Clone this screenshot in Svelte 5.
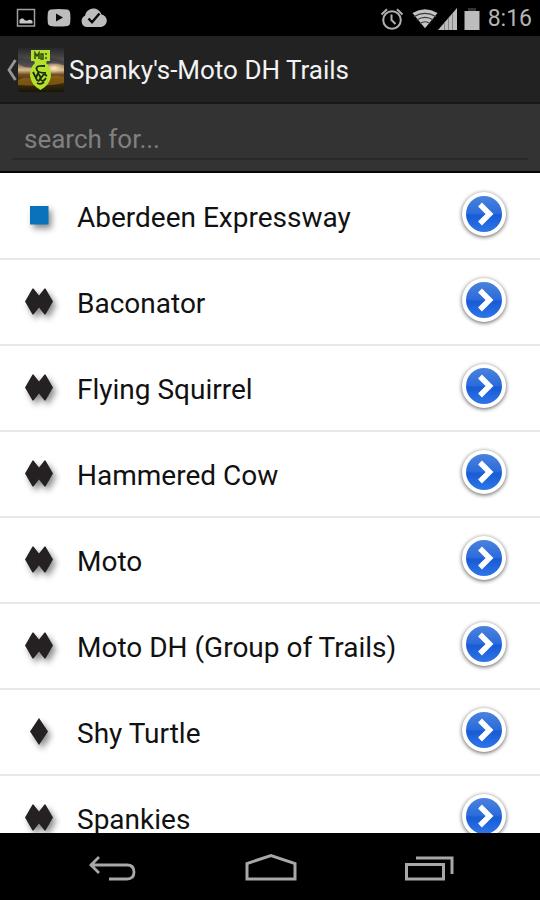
<script>
  const trails = [
    { name: 'Aberdeen Expressway', level: 'square' },
    { name: 'Baconator', level: 'double' },
    { name: 'Flying Squirrel', level: 'double' },
    { name: 'Hammered Cow', level: 'double' },
    { name: 'Moto', level: 'double' },
    { name: 'Moto DH (Group of Trails)', level: 'double' },
    { name: 'Shy Turtle', level: 'single' },
    { name: 'Spankies', level: 'double' }
  ];
  let query = $state('');
  let shown = $derived(trails.filter((t) => t.name.toLowerCase().includes(query.toLowerCase())));
</script>

<div class="screen">
  <div class="status">
    <div class="group left">
      <svg width="20" height="20" viewBox="0 0 20 20" aria-hidden="true">
        <rect x="1.5" y="1.5" width="17" height="16.500" fill="none" stroke="#a0a0a0" stroke-width="1.500" />
        <path d="M3.500 15.500v-3.500q3-3.500 5 0 2 1.500 4 0 2-1 4 1v2.500z" fill="#c8c8c8" />
      </svg>
      <svg width="24" height="20" viewBox="0 0 24 20" aria-hidden="true">
        <path d="M3.500 1.500Q12 .5 20.500 1.500 23 2 23.200 5 23.700 10 23.200 15 23 17.500 20.500 18 12 19 3.500 18 1 17.500.8 15 .3 10 .8 5 1 2 3.500 1.500z" fill="#bdbdbd" />
        <path d="M9 5.500v8l7-4z" fill="#0c0c0c" />
      </svg>
      <svg width="28" height="20" viewBox="0 0 28 20" aria-hidden="true">
        <path d="M6.500 19A6 6 0 0 1 5 7.700 8.500 8.500 0 0 1 21.500 6.500 6.300 6.300 0 0 1 21 19z" fill="#bdbdbd" />
        <path d="M8.500 10.500l3.500 3.700L19.500 5.500" fill="none" stroke="#080808" stroke-width="2.400" />
      </svg>
    </div>
    <div class="group right">
      <svg class="alarm" width="24" height="24" viewBox="0 0 24 24" aria-hidden="true">
        <g fill="none" stroke="#b0b0b0" stroke-width="2">
          <circle cx="12" cy="13" r="8.800" />
          <path d="M1.500 7.500L7 2.200M17 2.200l5.500 5.300M11.500 7.500V13l4 4" />
        </g>
      </svg>
      <svg width="26" height="24" viewBox="0 0 28 24" aria-hidden="true">
        <path d="M.5 5.500Q14-2.500 27.500 5.500L14 22z" fill="#c4c4c4" />
        <path d="M2 9.500Q14 2.500 26 9.500M5 13Q14 7.500 23 13M8.500 17Q14 13 19.500 17" fill="none" stroke="#3a3a3a" stroke-width="1.200" />
      </svg>
      <svg width="20" height="24" viewBox="0 0 20 24" aria-hidden="true">
        <path d="M0 23L19 1V23z" fill="#bdbdbd" />
        <path d="M6.500 15V23M10.500 11V23M14.500 6V23" stroke="#858585" stroke-width="1" />
      </svg>
      <svg class="battery" width="16" height="24" viewBox="0 0 16 24" aria-hidden="true">
        <path d="M4 1h8v3H4z" fill="#333" />
        <path d="M.5 4h15v19H.5z" fill="#bdbdbd" />
      </svg>
      <span class="clock">8:16</span>
    </div>
  </div>

  <header>
    <button class="up" aria-label="Navigate up">
      <svg width="11" height="24" viewBox="0 0 11 24" aria-hidden="true">
        <path d="M9.500 2L3 12l6.500 10" fill="none" stroke="#969696" stroke-width="2.800" />
      </svg>
      <svg width="46" height="44" viewBox="0 0 46 44" aria-hidden="true">
        <defs>
          <linearGradient id="dusk" x1="0" y1="0" x2="0" y2="1">
            <stop offset="0" stop-color="#25272c" />
            <stop offset=".28" stop-color="#54504c" />
            <stop offset=".42" stop-color="#a38666" />
            <stop offset=".5" stop-color="#d8bf91" />
            <stop offset=".6" stop-color="#765126" />
            <stop offset=".72" stop-color="#4a3510" />
            <stop offset="1" stop-color="#171708" />
          </linearGradient>
          <radialGradient id="sun">
            <stop offset="0" stop-color="#fff1c9" />
            <stop offset="1" stop-color="#e3bf7d" stop-opacity="0" />
          </radialGradient>
        </defs>
        <rect width="46" height="44" fill="url(#dusk)" />
        <path d="M0 9Q12 13 20 10T46 13V17Q30 14 20 18T0 16z" fill="#383b43" opacity=".7" />
        <ellipse cx="36" cy="20" rx="12" ry="6" fill="url(#sun)" />
        <path d="M0 32Q8 27 17 32T30 31T46 29V35Q28 39 0 37z" fill="#a17014" opacity=".6" />
        <path d="M13 2H32V13H29L28 15Q33 19 33 28 32 37 22.500 42 13 37 12 28 12 19 17 15L16 13H13z" fill="#b2e02c" />
        <path d="M17 11V5l2 3 2-3v6M23 6h2v5h-2zM28 5v2M28 9v2" fill="none" stroke="#33480f" stroke-width="1.500" />
        <path d="M27 18Q18 17 18.500 21T28 25M15 24l3 6 2-5 3 5 3-4 3 2M18 30q2 5 4 1 3 4 6-1M19 35q4 2 7-1" fill="none" stroke="#1c2b09" stroke-width="1.800" />
      </svg>
    </button>
    <h1>Spanky's-Moto DH Trails</h1>
  </header>

  <div class="search">
    <input type="text" aria-label="Search trails" placeholder="search for..." bind:value={query} />
  </div>

  <ul>
    {#each shown as trail (trail.name)}
      <li>
        <svg class="level" width="48" height="48" viewBox="0 0 48 48" aria-hidden="true">
          {#if trail.level === 'square'}
            <rect x="15" y="14" width="18.500" height="18.500" fill="#0872bb" />
          {:else if trail.level === 'single'}
            <path d="M24 10l9 13.500L24 37l-9-13.500z" fill="#252122" />
          {:else}
            <path d="M17.500 10.500h1l5.500 7 5.500-7h1l7.500 13-7.500 13h-1l-5.500-7-5.500 7h-1l-7.500-13z" fill="#252122" />
          {/if}
        </svg>
        <span class="name">{trail.name}</span>
        <button class="open" aria-label={`Open ${trail.name}`}>
          <svg width="56" height="56" viewBox="0 0 56 56" aria-hidden="true">
            <defs>
              <linearGradient id="blue" x1="0" y1="0" x2="0" y2="1">
                <stop offset="0" stop-color="#4a83dd" />
                <stop offset=".48" stop-color="#2c6cdb" />
                <stop offset=".54" stop-color="#175bd5" />
                <stop offset="1" stop-color="#2e76e9" />
              </linearGradient>
            </defs>
            <circle class="ring" cx="28" cy="26" r="22" fill="#fff" />
            <circle cx="28" cy="26" r="18" fill="url(#blue)" />
            <path d="M24 16.500l9.500 9.500-9.500 9.500" fill="none" stroke="#fff" stroke-width="5.500" />
          </svg>
        </button>
      </li>
    {/each}
  </ul>

  <nav>
    <button aria-label="Back">
      <svg width="50" height="32" viewBox="0 0 50 32" aria-hidden="true">
        <path d="M3 13H40Q47 13 47 20T40 27H22M12 5L4 13l8 8" fill="none" stroke="#a8a8a8" stroke-width="2.800" />
      </svg>
    </button>
    <button aria-label="Home">
      <svg width="52" height="32" viewBox="0 0 52 32" aria-hidden="true">
        <path d="M2 27V11.500L26 3.500 50 11.500V27z" fill="none" stroke="#a8a8a8" stroke-width="3" />
      </svg>
    </button>
    <button aria-label="Recent apps">
      <svg width="50" height="32" viewBox="0 0 50 32" aria-hidden="true">
        <path d="M2.500 12.500H39.500V27H2.500zM12 6H48V22" fill="none" stroke="#a8a8a8" stroke-width="3" />
      </svg>
    </button>
  </nav>
</div>

<style>
  :global(body) {
    margin: 0;
    background: #000;
  }
  .screen {
    display: flex;
    flex-direction: column;
    height: 100vh;
    overflow: hidden;
    font-family: Roboto, "Noto Sans", sans-serif;
    background: #000;
  }
  svg {
    display: block;
    flex: none;
  }
  button {
    padding: 0;
    border: 0;
    background: none;
    cursor: pointer;
  }
  .status {
    display: flex;
    flex: none;
    align-items: center;
    justify-content: space-between;
    height: 36px;
    padding: 0 8px 0 16px;
  }
  .group {
    display: flex;
    align-items: center;
  }
  .left {
    gap: 11px;
  }
  .left svg:last-child {
    margin-left: -2px;
  }
  .right {
    padding-top: 2px;
  }
  .alarm {
    margin-right: 8px;
  }
  .battery {
    margin: 0 8px 0 6px;
  }
  .clock {
    font-size: 23px;
    line-height: 34px;
    color: #b4b4b4;
  }
  header {
    display: flex;
    flex: none;
    align-items: center;
    box-sizing: border-box;
    height: 68px;
    padding: 2px 0 0 6px;
    background: #222;
    border-bottom: 2px solid #181818;
  }
  .up {
    display: flex;
    align-items: center;
    gap: 1px;
  }
  h1 {
    margin: 0 0 0 5px;
    font-size: 26px;
    font-weight: 400;
    line-height: 36px;
    color: #f3f3f3;
    white-space: nowrap;
  }
  .search {
    flex: none;
    padding: 8px 12px 11px;
    background: #333;
    border-bottom: 2px solid #050505;
  }
  input {
    display: block;
    box-sizing: border-box;
    width: 100%;
    height: 48px;
    padding: 8px 12px 0;
    border: 0;
    border-bottom: 2px solid #292929;
    outline: 0;
    background: transparent;
    color: #eee;
    font-family: inherit;
    font-size: 26px;
    line-height: 32px;
  }
  input::placeholder {
    color: #808080;
    opacity: 1;
  }
  ul {
    flex: 1;
    min-height: 0;
    margin: 0;
    padding: 1px 0 0;
    overflow: hidden;
    list-style: none;
    background: #fff;
  }
  li {
    display: flex;
    align-items: center;
    box-sizing: border-box;
    height: 86px;
    padding: 0 28px 0 15px;
    border-bottom: 2px solid #e8e8e8;
  }
  .level {
    filter: drop-shadow(3px 4px 3px rgba(0, 0, 0, 0.45));
  }
  .name {
    flex: 1;
    margin-left: 14px;
    padding-top: 4px;
    font-size: 28px;
    line-height: 36px;
    color: #111;
    white-space: nowrap;
  }
  .ring {
    filter: drop-shadow(0 1px 2px rgba(0, 0, 0, 0.65));
  }
  nav {
    display: flex;
    flex: none;
    align-items: center;
    justify-content: space-between;
    box-sizing: border-box;
    height: 67px;
    padding: 2px 86px 0 87px;
  }
</style>
